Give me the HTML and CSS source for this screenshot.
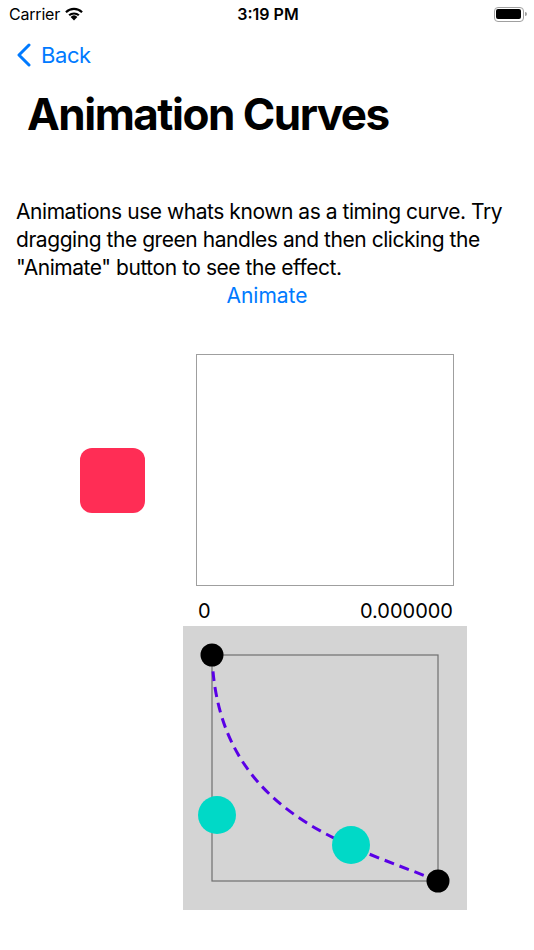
FILE: index.html
```html
<!DOCTYPE html>
<html lang="en">
<head>
    <meta charset="UTF-8">
    <meta name="viewport" content="width=device-width, initial-scale=1.0">
    <title>Animation Curves</title>
    <link rel="stylesheet" href="styles.css">
</head>
<body>
    <div class="status-bar">
        <div class="carrier">
            Carrier
            <svg class="wifi" width="20" height="14" viewBox="0 0 20 14">
                <path d="M10 13.5 L6.6 9.9 A5 5 0 0 1 13.4 9.9 Z" fill="#000"/>
                <path d="M4.4 7.6 A8.2 8.2 0 0 1 15.6 7.6 L14.1 9.1 A6.1 6.1 0 0 0 5.9 9.1 Z" fill="#000"/>
                <path d="M1.2 4.4 A12.6 12.6 0 0 1 18.8 4.4 L17.3 5.9 A10.5 10.5 0 0 0 2.7 5.9 Z" fill="#000"/>
            </svg>
        </div>
        <div class="time">3:19 PM</div>
        <div class="battery">
            <div class="battery-body"><div class="battery-level"></div></div>
            <div class="battery-nub"></div>
        </div>
    </div>

    <div class="nav">
        <a class="back" href="#">
            <svg width="16" height="24" viewBox="0 0 16 24">
                <path d="M13 2 L3 12 L13 22" fill="none" stroke="#007aff" stroke-width="3" stroke-linecap="round" stroke-linejoin="round"/>
            </svg>
            <span>Back</span>
        </a>
    </div>

    <h1 class="title">Animation Curves</h1>

    <p class="intro">Animations use whats known as a timing curve. Try dragging the green handles and then clicking the "Animate" button to see the effect.</p>

    <button class="animate-btn" onclick="animate()">Animate</button>

    <div class="demo">
        <div class="square" id="square"></div>
        <div class="track">
            <div class="track-box"></div>
            <div class="track-labels">
                <span id="time">0</span>
                <span id="value">0.000000</span>
            </div>
        </div>
    </div>

    <div class="curve-panel">
        <svg width="284" height="284" viewBox="0 0 284 284">
            <rect x="29" y="29" width="226" height="226" fill="none" stroke="#6f6f6f" stroke-width="1.2"/>
            <path id="curve" d="M29 29 C34 189 168 219 255 255" fill="none" stroke="#5a00e6" stroke-width="3" stroke-dasharray="10 6"/>
            <circle cx="29" cy="29" r="11.5" fill="#000"/>
            <circle cx="255" cy="255" r="11.5" fill="#000"/>
            <circle cx="34" cy="189" r="19" fill="#00d9c7"/>
            <circle cx="168" cy="219" r="19" fill="#00d9c7"/>
        </svg>
    </div>

    <script>
        function animate() {
            const square = document.getElementById('square');
            square.classList.remove('moving');
            void square.offsetWidth;
            square.classList.add('moving');
        }
    </script>
</body>
</html>
```

FILE: styles.css
```css
body {
    margin: 0;
    width: 534px;
    background-color: #fff;
    color: #000;
    font-family: Inter, "Noto Sans", sans-serif;
}

.status-bar {
    height: 28px;
    padding: 0 7px 0 9px;
    display: flex;
    align-items: center;
    justify-content: space-between;
    font-size: 16px;
}

.carrier {
    width: 120px;
    display: flex;
    align-items: center;
    gap: 4px;
    letter-spacing: -0.2px;
}

.time {
    font-weight: 600;
}

.battery {
    width: 120px;
    display: flex;
    justify-content: flex-end;
    align-items: center;
}

.battery-body {
    width: 25px;
    height: 10px;
    padding: 1.5px;
    border: 1px solid #a0a0a0;
    border-radius: 4px;
}

.battery-level {
    height: 100%;
    background-color: #000;
    border-radius: 2px;
}

.battery-nub {
    width: 2px;
    height: 4px;
    margin-left: 1px;
    background-color: #a0a0a0;
    border-radius: 0 2px 2px 0;
}

.nav {
    height: 54px;
    padding-left: 16px;
    display: flex;
    align-items: center;
}

.back {
    display: flex;
    align-items: center;
    gap: 9px;
    color: #007aff;
    text-decoration: none;
    font-size: 22px;
    line-height: 28px;
    letter-spacing: -0.4px;
}

.title {
    margin: 6px 0 0 27px;
    font-size: 44px;
    line-height: 52px;
    font-weight: 700;
    letter-spacing: -1.5px;
}

.intro {
    margin: 58px 16px 0 16px;
    font-size: 21px;
    line-height: 28px;
    letter-spacing: -0.45px;
}

.animate-btn {
    display: block;
    margin: 0 auto;
    padding: 0;
    border: none;
    background: none;
    color: #007aff;
    font-family: inherit;
    font-size: 21px;
    line-height: 28px;
    cursor: pointer;
}

.demo {
    margin-top: 44px;
    padding-left: 80px;
    display: flex;
    gap: 51px;
}

.square {
    width: 65px;
    height: 65px;
    margin-top: 94px;
    background-color: #ff2d55;
    border-radius: 12px;
}

.square.moving {
    animation: slide 1s ease-in-out;
}

@keyframes slide {
    to { transform: translateX(300px); }
}

.track {
    width: 258px;
}

.track-box {
    height: 230px;
    border: 1px solid #9f9f9f;
}

.track-labels {
    height: 24px;
    margin-top: 13px;
    padding: 0 1px 0 2px;
    display: flex;
    justify-content: space-between;
    font-size: 20px;
    line-height: 24px;
}

.curve-panel {
    width: 284px;
    height: 284px;
    margin: 3px 0 0 183px;
    background-color: #d4d4d4;
}

.curve-panel svg {
    display: block;
}
```
